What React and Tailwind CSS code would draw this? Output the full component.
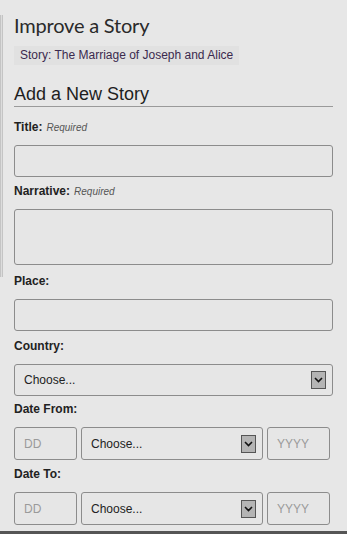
import React from "react";

const Arrow = () => (
  <span className="flex h-[18px] w-[15px] items-center justify-center border border-[#555] bg-[#b4b4b4]">
    <svg width="9" height="6" viewBox="0 0 9 6">
      <path d="M1 1 L4.5 4.5 L8 1" fill="none" stroke="#111" strokeWidth="1.6" />
    </svg>
  </span>
);

const Label = ({ children, required }) => (
  <div className="mb-[11px] h-[13px] text-[12px] font-bold leading-[13px] text-[#222]">
    {children}
    {required && (
      <span className="ml-[4px] text-[10px] font-normal italic text-[#555]">Required</span>
    )}
  </div>
);

const Box = ({ className = "", children }) => (
  <div
    className={`flex items-center rounded-[3px] border border-[#8c8c8c] bg-[#e6e6e6] text-[12px] ${className}`}
  >
    {children}
  </div>
);

const Select = ({ className = "" }) => (
  <Box className={`justify-between pl-[9px] pr-[6px] text-[#222] ${className}`}>
    <span>Choose...</span>
    <Arrow />
  </Box>
);

const DateRow = ({ label, gap }) => (
  <div className={gap}>
    <Label>{label}</Label>
    <div className="flex gap-[4px]">
      <Box className="h-[33px] w-[63px] pl-[9px] text-[#9a9a9a]">DD</Box>
      <Select className="h-[33px] w-[182px]" />
      <Box className="h-[33px] w-[63px] pl-[9px] text-[#9a9a9a]">YYYY</Box>
    </div>
  </div>
);

export default function App() {
  return (
    <div className="h-[534px] w-[347px] overflow-hidden bg-[#e7e7e7] font-['Liberation_Sans',Arial,sans-serif]">
      <div className="flex h-[531px]">
        <div className="mt-[15px] h-[262px] w-[3px] border-l border-r border-[#c4c4c4] bg-[#dcdcdc]" />
        <div className="flex-1 pl-[11px] pr-[14px] pt-[12px]">
          <h1 className="font-['Lato',sans-serif] text-[20px] leading-[26px] tracking-[-0.2px] text-[#2a2a2a]">
            Improve a Story
          </h1>
          <div className="mt-[8px] inline-block bg-[#e1e1e1] px-[6px] py-[2px] text-[12px] leading-[15px] text-[#3b2a4e]">
            Story: The Marriage of Joseph and Alice
          </div>
          <h2 className="mt-[18px] border-b border-[#9a9a9a] pb-[1px] text-[18px] leading-[21px] text-[#1e1e1e]">
            Add a New Story
          </h2>
          <div className="mt-[14px]">
            <div className="mb-[8px]">
              <Label required>Title:</Label>
              <Box className="h-[32px]" />
            </div>
            <div className="mb-[10px]">
              <Label required>Narrative:</Label>
              <Box className="h-[56px]" />
            </div>
            <div className="mb-[9px]">
              <Label>Place:</Label>
              <Box className="h-[32px]" />
            </div>
            <div className="mb-[7px]">
              <Label>Country:</Label>
              <Select className="h-[32px]" />
            </div>
            <DateRow label="Date From:" gap="mb-[8px]" />
            <DateRow label="Date To:" />
          </div>
        </div>
      </div>
      <div className="h-[3px] bg-[#555]" />
    </div>
  );
}
